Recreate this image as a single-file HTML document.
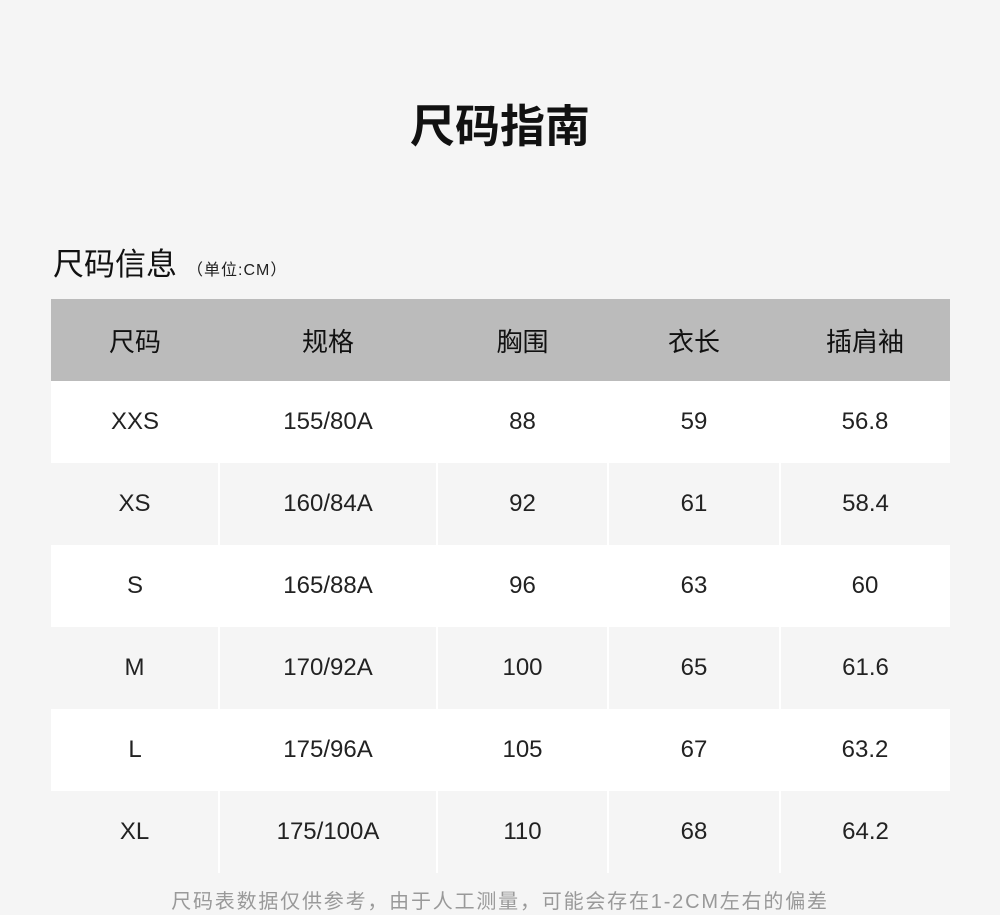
<!DOCTYPE html>
<html><head><meta charset="utf-8"><style>
*{margin:0;padding:0;box-sizing:border-box}
body{width:1000px;height:914px;background:#f5f5f5;font-family:"Liberation Sans","Noto Sans CJK SC",sans-serif;color:#222;position:relative;overflow:hidden}
.t{position:absolute;left:0;width:1000px;top:97px;text-align:center;font-size:45px;font-weight:bold;line-height:60px;color:#111}
.s{position:absolute;left:53px;top:244px;font-size:31px;line-height:42px;color:#111}
.s small{font-size:16px;color:#222;margin-left:10px;letter-spacing:1px}
table{position:absolute;left:51px;top:299px;width:899px;border-collapse:collapse;table-layout:fixed}
td{height:82px;text-align:center;font-size:24px;color:#222;padding:0}
tr.h td{background:#bbb;font-size:26px;color:#111}
tr.w td{background:#fff}
tr.g td{background:#f5f5f5;border-left:2px solid #fff}
tr.g td:first-child{border-left:none}
.f{position:absolute;left:0;width:1000px;top:889px;text-align:center;font-size:20px;letter-spacing:1.8px;color:#999;line-height:26px}
</style></head><body>
<div class="t">尺码指南</div>
<div class="s">尺码信息<small>（单位:CM）</small></div>
<table>
<colgroup><col style="width:168px"><col style="width:218px"><col style="width:171px"><col style="width:172px"><col style="width:170px"></colgroup>
<tr class="h"><td>尺码</td><td>规格</td><td>胸围</td><td>衣长</td><td>插肩袖</td></tr>
<tr class="w"><td>XXS</td><td>155/80A</td><td>88</td><td>59</td><td>56.8</td></tr>
<tr class="g"><td>XS</td><td>160/84A</td><td>92</td><td>61</td><td>58.4</td></tr>
<tr class="w"><td>S</td><td>165/88A</td><td>96</td><td>63</td><td>60</td></tr>
<tr class="g"><td>M</td><td>170/92A</td><td>100</td><td>65</td><td>61.6</td></tr>
<tr class="w"><td>L</td><td>175/96A</td><td>105</td><td>67</td><td>63.2</td></tr>
<tr class="g"><td>XL</td><td>175/100A</td><td>110</td><td>68</td><td>64.2</td></tr>
</table>
<div class="f">尺码表数据仅供参考，由于人工测量，可能会存在1-2CM左右的偏差</div>
</body></html>
